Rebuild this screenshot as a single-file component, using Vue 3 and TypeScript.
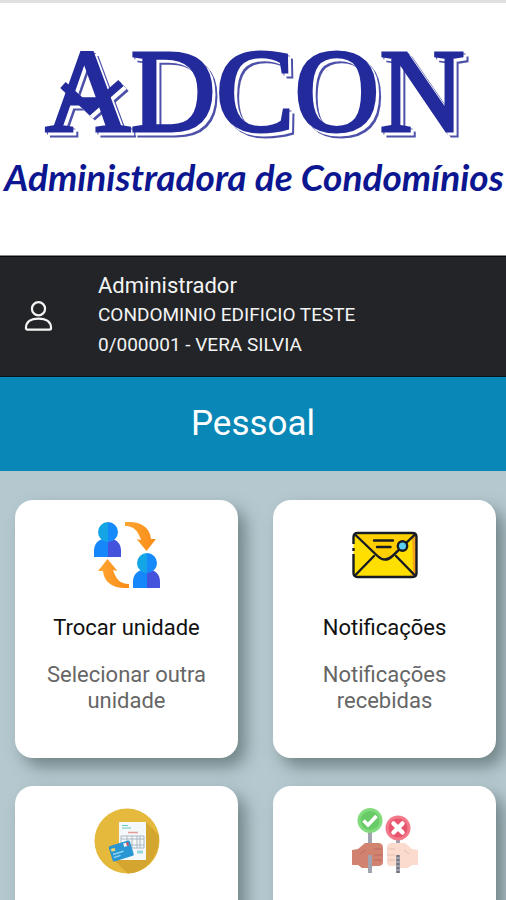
<script setup lang="ts">
type IconName = 'swap' | 'mail' | 'bill' | 'vote'

interface MenuCard {
  icon: IconName
  title: string
  text: string
}

const user = {
  role: 'Administrador',
  building: 'CONDOMINIO EDIFICIO TESTE',
  unit: '0/000001 - VERA SILVIA',
}

const cards: MenuCard[] = [
  { icon: 'swap', title: 'Trocar unidade', text: 'Selecionar outra unidade' },
  { icon: 'mail', title: 'Notificações', text: 'Notificações recebidas' },
  { icon: 'bill', title: '', text: '' },
  { icon: 'vote', title: '', text: '' },
]
</script>

<template>
  <div class="screen">
    <header class="brand">
      <svg class="logo" viewBox="0 0 506 200">
        <g class="logo-mark">
          <text class="logo-name" x="255" y="128" text-anchor="middle">ADCON</text>
          <path d="M63 82L90 107L121 80" fill="none" stroke="#232b9c" stroke-width="8" />
        </g>
        <text class="logo-tag" x="254" y="188" text-anchor="middle">Administradora de Condomínios</text>
      </svg>
    </header>

    <section class="user">
      <svg class="avatar" viewBox="0 0 30 32" fill="none" stroke="#f4f4f4" stroke-width="2.3" stroke-linejoin="round">
        <circle cx="15" cy="8.5" r="6.8" />
        <path d="M2 28.5C2 21.5 8 18.6 15 18.6S28 21.5 28 28.5Q28 30 26.500 30H3.500Q2 30 2 28.500Z" />
      </svg>
      <div class="user-info">
        <p class="role">{{ user.role }}</p>
        <p class="detail">{{ user.building }}</p>
        <p class="detail">{{ user.unit }}</p>
      </div>
    </section>

    <h1 class="title">Pessoal</h1>

    <main class="grid">
      <button v-for="card in cards" :key="card.icon" class="card" type="button">
        <svg v-if="card.icon === 'swap'" class="icon" viewBox="0 0 66 66">
          <defs>
            <linearGradient id="arrow" x1="0" x2="1">
              <stop offset="0" stop-color="#ffa733" />
              <stop offset="1" stop-color="#f98b16" />
            </linearGradient>
            <g id="person">
              <path d="M0 35V29C0 22 4 18 9 17H14V35Z" fill="#1686fb" />
              <path d="M14 35V17H18C24 18 27 23 27 29V35Z" fill="#4353dc" />
              <path d="M14 0A10 10 0 0 0 14 20Z" fill="#14a5e5" />
              <path d="M14 0A10 10 0 0 1 14 20Z" fill="#1689fb" />
            </g>
          </defs>
          <use href="#person" />
          <use href="#person" x="39" y="31" />
          <path d="M31 0C46-1 56 5 57 17L62 17L52.500 29L42.500 17L47 18C44 9 40 4 31 4Z" fill="url(#arrow)" />
          <path d="M35 66C20 67 10 61 9 49L4 49L13.500 37L23.500 49L19 48C22 57 26 62 35 62Z" fill="url(#arrow)" />
        </svg>

        <svg v-else-if="card.icon === 'mail'" class="icon" viewBox="0 0 66 66">
          <rect x="1.500" y="11" width="63" height="44" rx="4" fill="#ffdf00" />
          <path d="M60 11H62Q64.500 12 64.500 15V51Q64 55 60 55H57L61 50Z" fill="#f6a51b" />
          <path d="M4 13L26 34Q33 41 40 34L62 13Z" fill="#ffcf00" />
          <g fill="none" stroke="#171b24" stroke-width="2.4" stroke-linejoin="round">
            <path d="M1.500 22V15Q1.500 11 5.500 11H60.500Q64.500 11 64.500 15V51Q64.500 55 60.500 55H5.500Q1.500 55 1.500 51V32M1.500 26V29" />
            <path stroke-linecap="round" d="M3 12.500L25.500 34Q33 41 40.500 34L63 12.500M3 53.500L22 34M63 53.500L44 34M22 18.500H41M25 25H38.500" />
            <circle cx="50.500" cy="24" r="4.700" fill="#5bd0f3" />
          </g>
        </svg>

        <svg v-else-if="card.icon === 'bill'" class="icon" viewBox="0 0 66 66">
          <circle cx="33" cy="33" r="32.500" fill="#e5b93b" />
          <path d="M52 14L64.500 27C67 46 52 65 34 65.500L19 51Z" fill="#d4a52f" />
          <rect x="25" y="14" width="27" height="38" fill="#f4f8f8" />
          <path d="M28 17.500H34M28 20H37" stroke="#66c9bd" stroke-width="1" />
          <path d="M34 24.500H44" stroke="#e39b9b" stroke-width="1.500" />
          <path d="M27 28H50V40H27ZM33 28V40M38 28V40M43 28V40M46 28V40M27 31H50M27 37H50" fill="none" stroke="#aab8c3" stroke-width="1" />
          <path d="M43 44H49" stroke="#94d7df" stroke-width="3" />
          <g transform="rotate(-17 27 42)">
            <rect x="16" y="35" width="22" height="16" rx="1.500" fill="#2796d3" />
            <rect x="17.500" y="38" width="4" height="3" fill="#ead66d" />
            <rect x="31" y="36.500" width="3" height="3.500" fill="#f4f4f8" />
            <rect x="34" y="36.500" width="2" height="3.500" fill="#d95763" />
            <path d="M18 44H29M18 47H25" stroke="#8dd3ef" stroke-width="1.500" />
          </g>
        </svg>

        <svg v-else class="icon" viewBox="0 0 66 66">
          <path d="M18 22V65M46 30V65" stroke="#a1a3b0" stroke-width="4" />
          <circle cx="18" cy="12.500" r="12.500" fill="#82dc7e" />
          <circle cx="18" cy="12.500" r="9.500" fill="#68cb68" />
          <path d="M11.500 12.500L16 17L24.500 8" fill="none" stroke="#fff" stroke-width="3.600" />
          <circle cx="46" cy="20" r="12.500" fill="#f2788a" />
          <circle cx="46" cy="20" r="9.500" fill="#e7566d" />
          <path d="M41.500 15.500L50.500 24.500M50.500 15.500L41.500 24.500" stroke="#fff" stroke-width="4.500" stroke-linecap="round" />
          <path d="M0 42L6 41L13 35H26Q31 35 31 40V54Q31 58 26 58H21L18 60H10L6 57H0Z" fill="#d28370" />
          <path d="M22 41H30M22 47H31M22 52H30M8 46L14 42" stroke="#b86b5f" stroke-width="1" />
          <path d="M66 42L60 41L53 35H40Q35 35 35 40V54Q35 58 39 58H44L48 60H56L60 57H66Z" fill="#fadbcd" />
          <path d="M36 41H43M35 47H43M36 52H43M57 46L52 42" stroke="#e9bfb0" stroke-width="1" />
          <path d="M18 47V65M46 47V65" stroke="#a1a3b0" stroke-width="4" />
          <path d="M46 47V65" stroke="#77747f" stroke-width="3" stroke-dasharray="2 2" />
        </svg>

        <span v-if="card.title" class="card-title">{{ card.title }}</span>
        <span v-if="card.text" class="card-text">{{ card.text }}</span>
      </button>
    </main>
  </div>
</template>

<style>
body {
  margin: 0;
}
</style>

<style scoped>
.screen {
  height: 100vh;
  overflow: hidden;
  background: #b5c8cf;
  font-family: Roboto, "Liberation Sans", sans-serif;
}

.brand {
  box-sizing: border-box;
  min-height: 256px;
  border-top: 3px solid #e0e0e0;
  border-bottom: 1px solid #85878a;
  background: #fff;
}

.logo {
  display: block;
  width: 100%;
  overflow: visible;
}

.logo-mark {
  filter: drop-shadow(3px 3px 0 #fff) drop-shadow(2px 2px 0 #4d51a9);
}

.logo-name {
  fill: #232b9c;
  stroke: #232b9c;
  stroke-width: 3px;
  font: 400 118px "Liberation Serif", serif;
}

.logo-tag {
  fill: #0c1690;
  font: italic 700 37px Lato, sans-serif;
}

.user {
  display: flex;
  align-items: center;
  gap: 45px;
  box-sizing: border-box;
  min-height: 121px;
  padding: 0 24px 2px;
  border-top: 1px solid #08090b;
  border-bottom: 1px solid #08131a;
  background: #222428;
  color: #f4f4f4;
}

.avatar {
  width: 29px;
  height: 32px;
}

.user-info p {
  margin: 0;
}

.user-info .role {
  font-size: 22px;
  line-height: 28px;
}

.user-info .detail {
  font-size: 19px;
  line-height: 30px;
}

.title {
  margin: 0;
  background: #0987b6;
  color: #fff;
  font-size: 35px;
  font-weight: 400;
  line-height: 94px;
  text-align: center;
}

.grid {
  display: grid;
  grid-template-columns: 1fr 1fr;
  gap: 28px 35px;
  padding: 29px 10px 28px 15px;
}

.card {
  display: flex;
  flex-direction: column;
  align-items: center;
  min-height: 258px;
  padding: 22px 28px;
  border: 0;
  border-radius: 18px;
  background: #fff;
  box-shadow: 8px 9px 16px rgba(60, 80, 78, 0.55);
  font-family: inherit;
  text-align: center;
}

.icon {
  width: 66px;
  height: 66px;
}

.card-title {
  margin-top: 26px;
  color: #111;
  font-size: 22px;
  line-height: 28px;
}

.card-text {
  margin-top: 20px;
  color: #666;
  font-size: 22px;
  line-height: 26px;
}
</style>
